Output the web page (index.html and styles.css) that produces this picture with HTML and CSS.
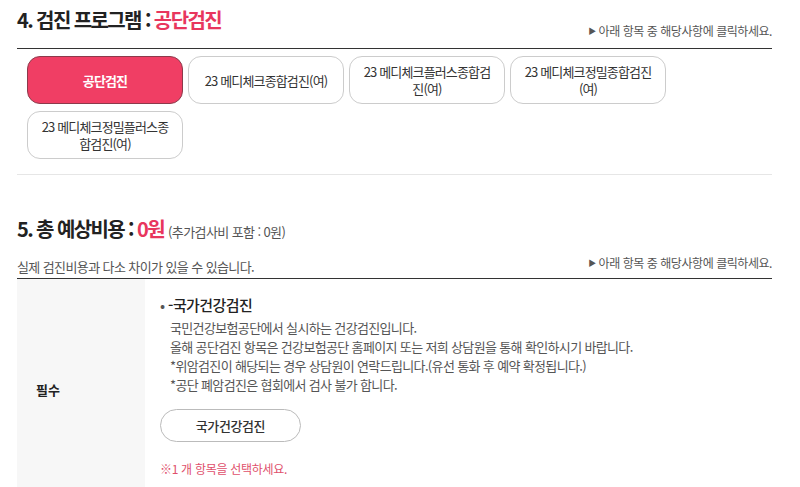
FILE: index.html
```html
<!DOCTYPE html>
<html lang="ko">
<head>
<meta charset="utf-8">
<link rel="stylesheet" href="styles.css">
</head>
<body>
<div class="page">
  <section class="sec">
    <div class="sec-head">
      <h2 class="sec-title">4. 검진 프로그램 : <span class="red">공단검진</span></h2>
      <p class="note"><span class="tri">▶</span> 아래 항목 중 해당사항에 클릭하세요.</p>
    </div>
    <div class="prog-list">
      <button class="prog active">공단검진</button>
      <button class="prog">23 메디체크종합검진(여)</button>
      <button class="prog">23 메디체크플러스종합검진(여)</button>
      <button class="prog">23 메디체크정밀종합검진(여)</button>
      <button class="prog">23 메디체크정밀플러스종합검진(여)</button>
    </div>
  </section>

  <section class="sec sec5">
    <h2 class="sec-title">5. 총 예상비용 : <span class="red">0원</span> <span class="sub">(추가검사비 포함 : 0원)</span></h2>
    <div class="sec-head2">
      <p class="desc">실제 검진비용과 다소 차이가 있을 수 있습니다.</p>
      <p class="note"><span class="tri">▶</span> 아래 항목 중 해당사항에 클릭하세요.</p>
    </div>
    <div class="table">
      <div class="th">필수</div>
      <div class="td">
        <p class="item-title"><span class="dot">•</span> -국가건강검진</p>
        <ul class="lines">
          <li>국민건강보험공단에서 실시하는 건강검진입니다.</li>
          <li>올해 공단검진 항목은 건강보험공단 홈페이지 또는 저희 상담원을 통해 확인하시기 바랍니다.</li>
          <li>*위암검진이 해당되는 경우 상담원이 연락드립니다.(유선 통화 후 예약 확정됩니다.)</li>
          <li>*공단 폐암검진은 협회에서 검사 불가 합니다.</li>
        </ul>
        <button class="opt">국가건강검진</button>
        <p class="warn">※1 개 항목을 선택하세요.</p>
      </div>
    </div>
  </section>
</div>
</body>
</html>
```

FILE: styles.css
```css
* { box-sizing: border-box; }
html, body { margin: 0; padding: 0; background: #fff; }
body {
  font-family: "Noto Sans CJK KR", "Noto Sans", sans-serif;
  color: #333;
}
.page { padding: 0 28px 0 17px; }
p, h2, ul { margin: 0; padding: 0; }
.red { color: #e8365d; }

.sec-head {
  display: flex;
  justify-content: space-between;
  align-items: flex-end;
  height: 49px;
  padding-top: 7px;
  padding-bottom: 9px;
  border-bottom: 1px solid #333;
}
.sec-title {
  font-size: 20px;
  line-height: 26px;
  font-weight: 700;
  color: #222;
  letter-spacing: -1.6px;
  align-self: flex-start;
}
.note {
  font-size: 12px;
  line-height: 16px;
  color: #555;
  letter-spacing: -0.45px;
}
.tri { font-size: 8px; vertical-align: 2px; color: #555; }

.prog-list {
  display: flex;
  flex-wrap: wrap;
  gap: 7px 5px;
  padding: 7px 10px 15px;
  border-bottom: 1px solid #e6e6e6;
}
.prog {
  width: 156px;
  height: 48px;
  border: 1px solid #ccc;
  border-radius: 13px;
  background: #fff;
  font-family: inherit;
  font-size: 13px;
  line-height: 17px;
  color: #333;
  padding: 0 10px;
  letter-spacing: -0.85px;
}
.prog.active {
  background: #f03e64;
  border-color: #8c3a4b;
  color: #fff;
  font-weight: 700;
}

.sec5 { padding-top: 41px; }
.sec5 .sec-title { line-height: 26px; }
.sub { font-size: 13px; font-weight: 400; color: #555; letter-spacing: -0.6px; }
.sec-head2 {
  display: flex;
  justify-content: space-between;
  align-items: flex-end;
  padding-top: 8px;
  padding-bottom: 2px;
  border-bottom: 1px solid #333;
  height: 34px;
}
.sec-head2 .note { align-self: flex-start; padding-top: 2px; }
.desc { font-size: 13px; line-height: 18px; color: #555; letter-spacing: -0.6px; }

.table { display: flex; height: 220px; }
.th {
  width: 128px;
  background: #f7f7f7;
  display: flex;
  align-items: center;
  padding-left: 19px;
  font-size: 13px;
  font-weight: 700;
  color: #222;
}
.td { flex: 1; padding: 15px 0 0 15px; }
.item-title {
  font-size: 15px;
  line-height: 22px;
  color: #222;
  font-weight: 500;
  letter-spacing: -0.6px;
}
.dot { font-size: 15px; color: #555; font-weight: 400; }
.lines { list-style: none; padding: 2px 0 0 10px; }
.lines li { font-size: 13px; line-height: 19px; color: #555; letter-spacing: -0.65px; }
.opt {
  margin-top: 15px;
  width: 141px;
  height: 33px;
  border: 1px solid #bbb;
  border-radius: 17px;
  background: #fff;
  font-family: inherit;
  font-size: 13px;
  color: #333;
  font-weight: 500;
  letter-spacing: -0.4px;
}
.warn {
  margin-top: 19px;
  font-size: 12px;
  line-height: 16px;
  color: #e0506c;
  letter-spacing: -0.3px;
}
```
